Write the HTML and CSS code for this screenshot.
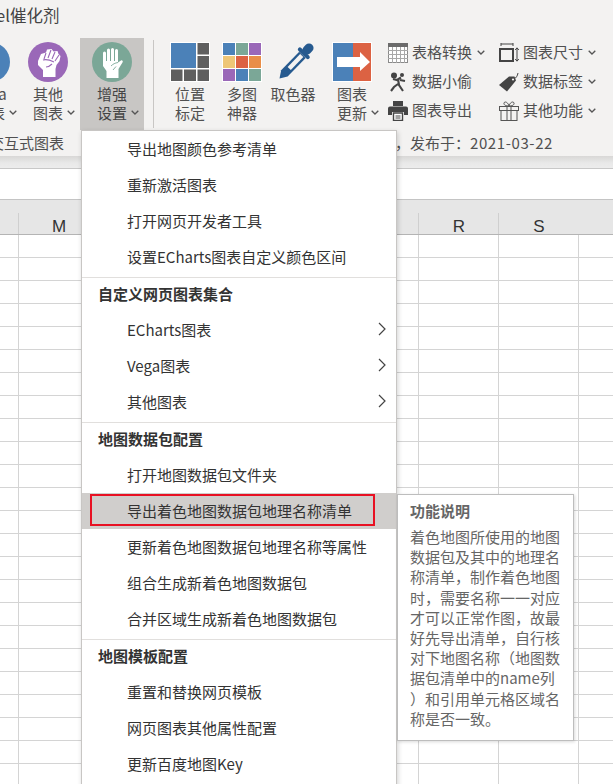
FILE: index.html
```html
<!DOCTYPE html>
<html lang="zh-CN">
<head>
<meta charset="utf-8">
<title>Excel催化剂</title>
<link rel="stylesheet" href="styles.css">
</head>
<body>
<svg class="defs" width="0" height="0">
  <symbol id="chev" viewBox="0 0 8 5"><path d="M.7.7 4 4 7.3.7" fill="none" stroke="#555" stroke-width="1.3"/></symbol>
  <symbol id="fist-open" viewBox="0 0 40 40">
    <path fill="#fff" d="M11 11a1.500 1.500 0 0 1 3 0V19h1V8a1.500 1.500 0 0 1 3 0V19h1V7.500a1.500 1.500 0 0 1 3 0V19h1V8.500a1.500 1.500 0 0 1 3 0V20.500l3-2c1-.7 2.400.6 1.600 1.800L26.500 27v9H14.500v-7L11 24z"/>
    <path fill="none" stroke="#7ba797" stroke-width=".9" d="M19 24c2-2 4-3 7-3.500M21 28l3-3.500"/>
  </symbol>
  <symbol id="fist-tilt" viewBox="0 0 40 40">
    <path fill="#fff" d="M10 19l3-7 5-1.500 1-3 4.500-.5 2 2.500 4-.5 1 3 2 2-1 5-3 4-1 4v8H15v-7l-5-5z"/>
    <path fill="none" stroke="#9a68b8" stroke-width="1.100" d="M18 11l-2 6M23 8l-3 8M27 10l-3 7M31 13l-4 6M15 18c3-1 7 0 11 2M18 25c2 0 4-1 6-3"/>
  </symbol>
</svg>

<header class="ribbon">
  <div class="title">Excel催化剂</div>
  <div class="tools">
    <div class="tool tool-blue">
      <svg class="tile" width="40" height="40" viewBox="0 0 40 40"><circle cx="20" cy="20" r="20" fill="#4b81b8"/></svg>
      <div class="line">Vega</div>
      <div class="line more">图表<svg class="chev"><use href="#chev"/></svg></div>
    </div>
    <div class="tool">
      <svg class="tile" width="40" height="40" viewBox="0 0 40 40"><circle cx="20" cy="20" r="20" fill="#9a68b8"/><use href="#fist-tilt" width="40" height="40"/></svg>
      <div class="line">其他</div>
      <div class="line more">图表<svg class="chev"><use href="#chev"/></svg></div>
    </div>
    <div class="tool tool-active">
      <svg class="tile" width="40" height="40" viewBox="0 0 40 40"><circle cx="20" cy="20" r="20" fill="#7ba797"/><use href="#fist-open" width="40" height="40"/></svg>
      <div class="line">增强</div>
      <div class="line more">设置<svg class="chev"><use href="#chev"/></svg></div>
    </div>
    <div class="divider"></div>
    <div class="tool tool-pos">
      <svg class="tile" width="40" height="40" viewBox="0 0 40 40">
        <rect width="40" height="40" fill="#fff"/>
        <rect x="1" y="1" width="25" height="25" fill="#4b81b8"/>
        <rect x="27.500" y="1" width="11.500" height="11.500" fill="#5f5f5f"/><rect x="27.500" y="14" width="11.500" height="12" fill="#5f5f5f"/>
        <rect x="1" y="27.500" width="11.500" height="11.500" fill="#5f5f5f"/><rect x="14" y="27.500" width="12" height="11.500" fill="#5f5f5f"/><rect x="27.500" y="27.500" width="11.500" height="11.500" fill="#5f5f5f"/>
      </svg>
      <div class="line">位置</div>
      <div class="line">标定</div>
    </div>
    <div class="tool tool-multi">
      <svg class="tile" width="40" height="40" viewBox="0 0 40 40">
        <rect width="40" height="40" fill="#fff"/>
        <rect x="1" y="1" width="12" height="12" fill="#4b81b8"/><rect x="14" y="1" width="12" height="12" fill="#7ba797"/><rect x="27" y="1" width="12" height="12" fill="#9a68b8"/>
        <rect x="1" y="14" width="12" height="12" fill="#eec677"/><rect x="14" y="14" width="12" height="12" fill="#dc6243"/><rect x="27" y="14" width="12" height="12" fill="#e98e48"/>
        <rect x="1" y="27" width="12" height="12" fill="#9a68b8"/><rect x="14" y="27" width="12" height="12" fill="#4b81b8"/><rect x="27" y="27" width="12" height="12" fill="#7ba797"/>
      </svg>
      <div class="line">多图</div>
      <div class="line">神器</div>
    </div>
    <div class="tool tool-pick">
      <svg class="tile" width="44" height="40" viewBox="0 0 44 40">
        <g transform="translate(37 7) rotate(44)">
          <rect x="-4.500" y="-6" width="9" height="12" rx="4.500" fill="#265a8f"/>
          <rect x="-7.500" y="4" width="15" height="4" rx="2" fill="#265a8f"/>
          <path d="M-4.500 8H4.500V34L0 41-4.500 34z" fill="#265a8f"/>
          <path d="M-2.200 9H2.200V27H-2.200z" fill="#f3f2f1"/>
        </g>
      </svg>
      <div class="line">取色器</div>
    </div>
    <div class="tool tool-update">
      <svg class="tile" width="40" height="40" viewBox="0 0 40 40">
        <rect width="40" height="40" fill="#fff"/>
        <rect x="1" y="1" width="20" height="38" fill="#4b81b8"/><rect x="21" y="1" width="18" height="38" fill="#dc6243"/>
        <path d="M5 15H28V10L38 20 28 29V25H5z" fill="#fff"/>
      </svg>
      <div class="line">图表</div>
      <div class="line more">更新<svg class="chev"><use href="#chev"/></svg></div>
    </div>
    <div class="small-col">
      <div class="small">
        <svg class="ico" width="20" height="20" viewBox="0 0 20 20"><rect x=".5" y=".5" width="19" height="19" fill="#fff" stroke="#8a8a8a"/><rect width="20" height="4" fill="#6b6b6b"/><path d="M4.500 4v16M8.500 4v16M12.500 4v16M16.500 4v16M0 7.500h20M0 11.500h20M0 15.500h20" stroke="#a8a8a8" fill="none"/></svg>
        <span>表格转换</span><svg class="chev"><use href="#chev"/></svg>
      </div>
      <div class="small">
        <svg class="ico" width="20" height="20" viewBox="0 0 20 20"><circle cx="6" cy="3.500" r="3" fill="#444"/><circle cx="14" cy="3" r="2" fill="#444"/><path d="M13 5.500 9 8 5 7M10 7l1 6 4 6M10 12l-4 3-3 4M12 8l5 1" fill="none" stroke="#444" stroke-width="2.100"/></svg>
        <span>数据小偷</span>
      </div>
      <div class="small">
        <svg class="ico" width="20" height="20" viewBox="0 0 20 20"><path d="M5 0h10v5H5z" fill="#444"/><path d="M2 5.500h16a2 2 0 0 1 2 2V14h-4v-3H4v3H0V7.500a2 2 0 0 1 2-2z" fill="#444"/><path d="M5.500 12h9v7.500h-9z" fill="#fff" stroke="#444" stroke-width="1.400"/><path d="M7.500 15h5M7.500 17h5" stroke="#444"/></svg>
        <span>图表导出</span>
      </div>
    </div>
    <div class="small-col small-col-2">
      <div class="small">
        <svg class="ico" width="20" height="20" viewBox="0 0 20 20"><path d="M2 1h12M2 0v3M14 0v3" fill="none" stroke="#444"/><rect x="1" y="6" width="13" height="12" fill="none" stroke="#444" stroke-width="2"/><path d="M18 5v13M16.200 7 18 4.800 19.800 7M16.200 16 18 18.200 19.800 16" fill="none" stroke="#444"/></svg>
        <span>图表尺寸</span><svg class="chev"><use href="#chev"/></svg>
      </div>
      <div class="small">
        <svg class="ico" width="20" height="20" viewBox="0 0 20 20"><path d="M0 13 10 4.500h5.500l1.500 4-9 11z" fill="#444"/><circle cx="14" cy="7.500" r="1.100" fill="#f3f2f1"/><path d="M15 7c2-1 3.500-3 4-6" fill="none" stroke="#444"/></svg>
        <span>数据标签</span><svg class="chev"><use href="#chev"/></svg>
      </div>
      <div class="small">
        <svg class="ico" width="20" height="20" viewBox="0 0 20 20"><rect x=".5" y="5.500" width="19" height="4" fill="none" stroke="#555"/><rect x="2" y="9.500" width="16" height="10" fill="none" stroke="#555"/><path d="M8 5.500v14M12 5.500v14" stroke="#555" fill="none"/><path d="M10 5C7 5 4.500 4 5 2s4-1 5 3c1-4 4.500-5 5-3s-2 3-5 3z" fill="none" stroke="#555"/></svg>
        <span>其他功能</span><svg class="chev"><use href="#chev"/></svg>
      </div>
    </div>
  </div>
  <div class="groups">
    <span class="group-a">交互式图表</span>
    <span class="group-b">，发布于：<span class="date">2021-03-22</span></span>
  </div>
</header>

<div class="band"></div>
<div class="formula"></div>
<div class="cols">
  <div class="col col-first"></div>
  <div class="col">M</div><div class="col"></div><div class="col"></div><div class="col"></div><div class="col"></div>
  <div class="col">R</div><div class="col">S</div>
</div>
<div class="sheet"></div>

<nav class="menu">
  <div class="item">导出地图颜色参考清单</div>
  <div class="item">重新激活图表</div>
  <div class="item">打开网页开发者工具</div>
  <div class="item">设置ECharts图表自定义颜色区间</div>
  <div class="sep"></div>
  <div class="head">自定义网页图表集合</div>
  <div class="item sub">ECharts图表<svg class="arrow" width="8" height="14" viewBox="0 0 8 14"><path d="M1 1l6 6-6 6" fill="none" stroke="#444" stroke-width="1.200"/></svg></div>
  <div class="item sub">Vega图表<svg class="arrow" width="8" height="14" viewBox="0 0 8 14"><path d="M1 1l6 6-6 6" fill="none" stroke="#444" stroke-width="1.200"/></svg></div>
  <div class="item sub">其他图表<svg class="arrow" width="8" height="14" viewBox="0 0 8 14"><path d="M1 1l6 6-6 6" fill="none" stroke="#444" stroke-width="1.200"/></svg></div>
  <div class="sep"></div>
  <div class="head">地图数据包配置</div>
  <div class="item">打开地图数据包文件夹</div>
  <div class="item item-on">导出着色地图数据包地理名称清单<span class="redbox"></span></div>
  <div class="item">更新着色地图数据包地理名称等属性</div>
  <div class="item">组合生成新着色地图数据包</div>
  <div class="item">合并区域生成新着色地图数据包</div>
  <div class="sep"></div>
  <div class="head">地图模板配置</div>
  <div class="item">重置和替换网页模板</div>
  <div class="item">网页图表其他属性配置</div>
  <div class="item">更新百度地图Key</div>
</nav>

<aside class="tip">
  <div class="tip-title">功能说明</div>
  <p class="tip-text">着色地图所使用的地图数据包及其中的地理名称清单，制作着色地图时，需要名称一一对应才可以正常作图，故最好先导出清单，自行核对下地图名称（地图数据包清单中的name列）和引用单元格区域名称是否一致。</p>
</aside>
</body>
</html>
```
FILE: styles.css
```css
* { box-sizing: border-box; }
html, body { margin: 0; height: 100%; }
body {
  position: relative;
  width: 613px;
  height: 784px;
  overflow: hidden;
  background: #fff;
  font-family: "Noto Sans CJK SC", "Noto Sans", sans-serif;
  font-size: 15px;
  color: #444;
}
.defs { position: absolute; }

.ribbon { height: 156px; background: #f3f2f1; overflow: hidden; }
.title {
  height: 38px;
  margin-left: -29px;
  font-size: 16.5px;
  line-height: 31px;
  color: #444;
}
.tools { display: flex; height: 92px; margin-left: -36px; }
.tool {
  display: flex;
  flex-direction: column;
  align-items: center;
  flex: none;
  width: 64px;
  padding-top: 4px;
  color: #505050;
}
.tool-blue { width: 52px; }
.tool-active { background: #c8c6c4; color: #444; }
.tile { flex: none; display: block; margin-bottom: 2px; }
.tool-pos { width: 48px; margin-left: 12px; }
.tool-multi { width: 48px; margin-left: 4px; }
.tool-pick { width: 54px; margin-left: 0; }
.tool-update { width: 48px; margin-left: 8px; }
.divider { flex: none; width: 1px; height: 88px; margin: 2px 0 0 9px; background: #c8c6c4; }
.line {
  display: flex;
  align-items: center;
  justify-content: center;
  height: 19px;
  line-height: 19px;
  white-space: nowrap;
}
.more { padding-left: 12px; }
.chev { flex: none; width: 8px; height: 5px; margin-left: 4px; }

.small-col { display: flex; flex-direction: column; width: 111px; margin-left: 12px; }
.small-col-2 { margin-left: 0; }
.small { display: flex; align-items: center; height: 29px; color: #505050; white-space: nowrap; }
.small span { margin-left: 4px; padding-bottom: 3px; }
.small .chev { margin-left: 5px; }
.ico { flex: none; }

.groups {
  position: relative;
  height: 26px;
  line-height: 26px;
  font-size: 15px;
  color: #505050;
}
.group-a { position: absolute; left: -11px; }
.group-b { position: absolute; left: 395px; }
.date { letter-spacing: .6px; }

.band { height: 13px; background: linear-gradient(#d8d7d6, #e9e9e9 60%, #ececec); border-bottom: 1px solid #c8c8c8; }
.formula { height: 31px; background: #fff; border-bottom: 1px solid #c4c4c4; }
.cols {
  display: flex;
  height: 35px;
  background: #e6e6e6;
  border-bottom: 1px solid #b4b4b4;
  padding-top: 13px;
}
.col {
  flex: none;
  width: 80px;
  padding-left: 1px;
  border-left: 1px solid #cfcfcf;
  text-align: center;
  line-height: 27px;
  font-family: "Liberation Sans", sans-serif;
  font-size: 17px;
  color: #333;
}
.col-first { width: 18px; padding: 0; border-left: 0; }

.sheet {
  height: 549px;
  background-color: #fff;
  background-image:
    linear-gradient(90deg, #d4d4d4 1px, transparent 1px),
    linear-gradient(#d4d4d4 1px, transparent 1px);
  background-size: 80px 23px;
  background-position: 18px 22px;
}

.menu {
  position: absolute;
  left: 81px;
  top: 130px;
  width: 316px;
  height: 660px;
  background: #fff;
  border: 1px solid #c8c6c4;
  box-shadow: 1px 2px 5px rgba(0, 0, 0, .18);
  color: #333;
  font-size: 15px;
}
.item, .head {
  position: relative;
  height: 36px;
  line-height: 36px;
  white-space: nowrap;
}
.item { padding-left: 45px; }
.head { height: 34px; line-height: 31px; padding-left: 16px; font-weight: 700; color: #333; }
.sep { height: 1px; margin-top: 2px; background: #e1dfdd; }
.sub .arrow { position: absolute; right: 10px; top: 10px; }
.item-on { background: #d0cecc; }
.redbox {
  position: absolute;
  left: 8px;
  top: 1px;
  width: 285px;
  height: 32px;
  border: 2px solid #e81123;
}

.tip {
  position: absolute;
  left: 397px;
  top: 494px;
  width: 177px;
  height: 247px;
  padding: 5px 11px 5px 12px;
  background: #fff;
  border: 1px solid #bdbdbd;
  box-shadow: 1px 1px 3px rgba(0, 0, 0, .15);
  color: #666;
}
.tip-title { font-weight: 700; line-height: 22px; font-size: 15px; }
.tip-text { margin: 5px 0 0; line-height: 20.200px; font-size: 15px; line-break: anywhere; word-break: break-all; }
```
